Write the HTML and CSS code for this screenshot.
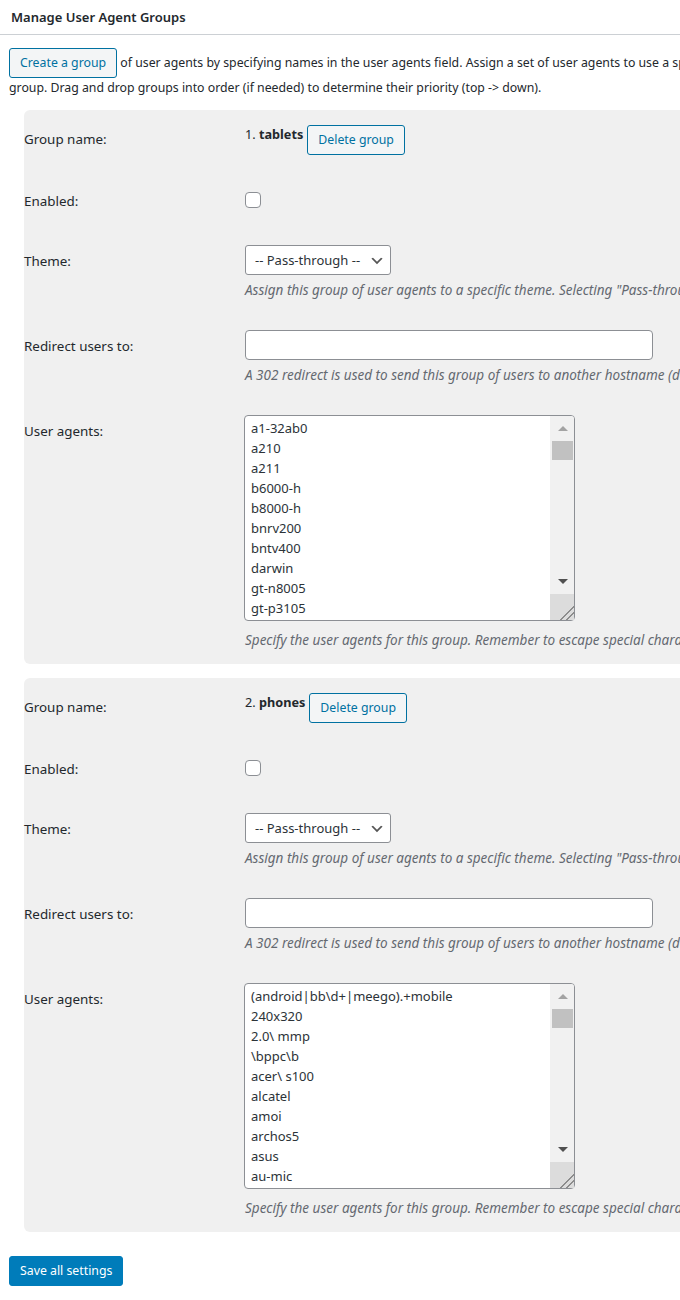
FILE: index.html
```html
<!DOCTYPE html>
<html lang="en">
<head>
    <meta charset="UTF-8">
    <meta name="viewport" content="width=device-width, initial-scale=1.0">
    <title>Manage User Agent Groups</title>
    <link rel="stylesheet" href="styles.css">
</head>
<body>
    <div class="wrap">
        <div class="postbox">
            <h3 class="hndle">Manage User Agent Groups</h3>
            <div class="inside">
                <p class="intro">
                    <button class="button">Create a group</button> of user agents by specifying names in the user agents field. Assign a set of user agents to use a specific theme, redirect them to another domain or if an existing mobile plugin is active, create user agent groups to ensure that a unique cache is created for each user agent<br>group. Drag and drop groups into order (if needed) to determine their priority (top -&gt; down).
                </p>

                <!-- group 1 -->
                <div class="group">
                    <div class="row">
                        <div class="label">Group name:</div>
                        <div class="value value-name">
                            <span class="group-name">1. <strong>tablets</strong></span>
                            <button class="button">Delete group</button>
                        </div>
                    </div>
                    <div class="row">
                        <div class="label">Enabled:</div>
                        <div class="value value-check">
                            <input type="checkbox" class="checkbox">
                        </div>
                    </div>
                    <div class="row">
                        <div class="label">Theme:</div>
                        <div class="value">
                            <span class="select-wrap">
                                <select class="select">
                                    <option>-- Pass-through --</option>
                                </select>
                                <svg class="chevron" width="16" height="16" viewBox="0 0 20 20"><path d="M5 6l5 5 5-5 2 1-7 7-7-7 2-1z" fill="#555"/></svg>
                            </span>
                            <p class="description">Assign this group of user agents to a specific theme. Selecting "Pass-through" allows any plugin(s) (e.g. mobile plugins) to properly handle requests for these user agents. If the "redirect users to" field is not empty, this setting is ignored.</p>
                        </div>
                    </div>
                    <div class="row">
                        <div class="label">Redirect users to:</div>
                        <div class="value">
                            <input type="text" class="text-input">
                            <p class="description">A 302 redirect is used to send this group of users to another hostname (domain); recommended if a 3rd party service provides a mobile version of your site.</p>
                        </div>
                    </div>
                    <div class="row row-last">
                        <div class="label">User agents:</div>
                        <div class="value">
                            <div class="textarea-wrap">
                                <textarea class="agents" rows="10">a1-32ab0
a210
a211
b6000-h
b8000-h
bnrv200
bntv400
darwin
gt-n8005
gt-p3105
gt-p6800
gt-p7100
gt-p7300
gt-p7310
gt-p7500
gt-p7510</textarea>
                                <div class="fake-scroll">
                                    <span class="arrow-up"></span>
                                    <span class="thumb"></span>
                                    <span class="arrow-down"></span>
                                    <span class="corner"></span>
                                </div>
                            </div>
                            <p class="description desc-agents">Specify the user agents for this group. Remember to escape special characters like spaces, dots or dashes with a backslash. Regular expressions are also supported.</p>
                        </div>
                    </div>
                </div>

                <!-- group 2 -->
                <div class="group">
                    <div class="row">
                        <div class="label">Group name:</div>
                        <div class="value value-name">
                            <span class="group-name">2. <strong>phones</strong></span>
                            <button class="button">Delete group</button>
                        </div>
                    </div>
                    <div class="row">
                        <div class="label">Enabled:</div>
                        <div class="value value-check">
                            <input type="checkbox" class="checkbox">
                        </div>
                    </div>
                    <div class="row">
                        <div class="label">Theme:</div>
                        <div class="value">
                            <span class="select-wrap">
                                <select class="select">
                                    <option>-- Pass-through --</option>
                                </select>
                                <svg class="chevron" width="16" height="16" viewBox="0 0 20 20"><path d="M5 6l5 5 5-5 2 1-7 7-7-7 2-1z" fill="#555"/></svg>
                            </span>
                            <p class="description">Assign this group of user agents to a specific theme. Selecting "Pass-through" allows any plugin(s) (e.g. mobile plugins) to properly handle requests for these user agents. If the "redirect users to" field is not empty, this setting is ignored.</p>
                        </div>
                    </div>
                    <div class="row">
                        <div class="label">Redirect users to:</div>
                        <div class="value">
                            <input type="text" class="text-input">
                            <p class="description">A 302 redirect is used to send this group of users to another hostname (domain); recommended if a 3rd party service provides a mobile version of your site.</p>
                        </div>
                    </div>
                    <div class="row row-last">
                        <div class="label">User agents:</div>
                        <div class="value">
                            <div class="textarea-wrap">
                                <textarea class="agents" rows="10">(android|bb\d+|meego).+mobile
240x320
2.0\ mmp
\bppc\b
acer\ s100
alcatel
amoi
archos5
asus
au-mic
audiovox
avantgo
benq
bird
blackberry</textarea>
                                <div class="fake-scroll">
                                    <span class="arrow-up"></span>
                                    <span class="thumb"></span>
                                    <span class="arrow-down"></span>
                                    <span class="corner"></span>
                                </div>
                            </div>
                            <p class="description desc-agents">Specify the user agents for this group. Remember to escape special characters like spaces, dots or dashes with a backslash. Regular expressions are also supported.</p>
                        </div>
                    </div>
                </div>
            </div>
        </div>

        <p class="submit">
            <button class="button-primary">Save all settings</button>
        </p>
    </div>
</body>
</html>
```

FILE: styles.css
```css
html, body {
    overflow: hidden;
}
body {
    margin: 0;
    background: #fff;
    color: #23282d;
    font-family: "Segoe UI", "Noto Sans", sans-serif;
    font-size: 12.3px;
    line-height: 1.4;
}
.wrap {
    width: 1200px;
}
.hndle {
    margin: 0;
    padding: 7px 11px;
    font-size: 13px;
    font-weight: 600;
    line-height: 20px;
    border-bottom: 1px solid #ccd0d4;
}
.inside {
    padding: 0 9px;
}
.intro {
    margin: 13px 0 12px;
    line-height: 20px;
    white-space: nowrap;
}
.button {
    display: inline-block;
    height: 30px;
    padding: 0 10px;
    font-family: inherit;
    font-size: 12.3px;
    line-height: 28px;
    color: #0071a1;
    background: #f3f5f6;
    border: 1px solid #0071a1;
    border-radius: 3px;
    cursor: pointer;
}
.group {
    margin: 0 0 14px 15px;
    background: #f0f0f0;
    border-radius: 6px;
}
.row {
    display: flex;
    align-items: flex-start;
}
.label {
    width: 221px;
    flex-shrink: 0;
    padding: 23px 0 0;
    font-size: 13.4px;
    line-height: 17px;
}
.row:first-child .label {
    padding-top: 21px;
}
.value {
    padding: 15px 0;
}
.row-last .value {
    padding-bottom: 14px;
}
.value-name {
    display: flex;
    align-items: flex-start;
    gap: 4px;
}
.group-name {
    font-size: 12.7px;
    line-height: 18px;
}
.value-check {
    display: flex;
    align-items: center;
    height: 30px;
}
.checkbox {
    appearance: none;
    width: 16px;
    height: 16px;
    margin: 0;
    background: #fff;
    border: 1px solid #8c8f94;
    border-radius: 4px;
}
.select-wrap {
    position: relative;
    display: inline-block;
}
.select {
    appearance: none;
    height: 30px;
    width: 146px;
    padding: 0 24px 0 9px;
    font-family: inherit;
    font-size: 13px;
    color: #2c3338;
    background: #fff;
    border: 1px solid #8c8f94;
    border-radius: 3px;
}
.chevron {
    position: absolute;
    right: 6px;
    top: 8px;
    pointer-events: none;
}
.description {
    margin: 5px 0 0;
    font-size: 13.5px;
    font-style: italic;
    color: #646970;
    line-height: 20px;
    white-space: nowrap;
}
.text-input {
    display: block;
    width: 408px;
    height: 30px;
    margin: 0;
    padding: 0 8px;
    box-sizing: border-box;
    background: #fff;
    border: 1px solid #8c8f94;
    border-radius: 4px;
}
.textarea-wrap {
    position: relative;
    width: 331px;
    margin-left: -1px;
}
.agents {
    display: block;
    width: 331px;
    height: 206px;
    margin: 0;
    padding: 2px 6px;
    box-sizing: border-box;
    font-family: inherit;
    font-size: 13px;
    line-height: 20px;
    color: #2c3338;
    background: #fff;
    border: 1px solid #8c8f94;
    border-radius: 4px;
    overflow: hidden;
    resize: none;
}
.desc-agents {
    margin-top: 9px;
}

/* drawn scrollbar over the textarea */
.fake-scroll {
    position: absolute;
    top: 1px;
    right: 1px;
    bottom: 1px;
    width: 24px;
    background: #f1f1f1;
    border-top-right-radius: 3px;
    border-bottom-right-radius: 3px;
}
.arrow-up {
    position: absolute;
    left: 8px;
    top: 10px;
    border-left: 5px solid transparent;
    border-right: 5px solid transparent;
    border-bottom: 5px solid #a3a3a3;
}
.thumb {
    position: absolute;
    left: 2px;
    right: 1px;
    top: 25px;
    height: 19px;
    background: #c1c1c1;
}
.arrow-down {
    position: absolute;
    left: 8px;
    bottom: 36px;
    border-left: 5px solid transparent;
    border-right: 5px solid transparent;
    border-top: 5px solid #505050;
}
.corner {
    position: absolute;
    left: 0;
    right: 0;
    bottom: 0;
    height: 26px;
    background:
        linear-gradient(135deg, transparent 72%, #8c8c8c 72%, #8c8c8c 76%, transparent 76%, transparent 84%, #8c8c8c 84%, #8c8c8c 88%, transparent 88%),
        #dcdcdc;
}
.submit {
    margin: 24px 0 0 9px;
}
.button-primary {
    height: 30px;
    padding: 0 10px;
    font-family: inherit;
    font-size: 12.3px;
    line-height: 28px;
    color: #fff;
    background: #007cba;
    border: 1px solid #007cba;
    border-radius: 3px;
    cursor: pointer;
}
```
